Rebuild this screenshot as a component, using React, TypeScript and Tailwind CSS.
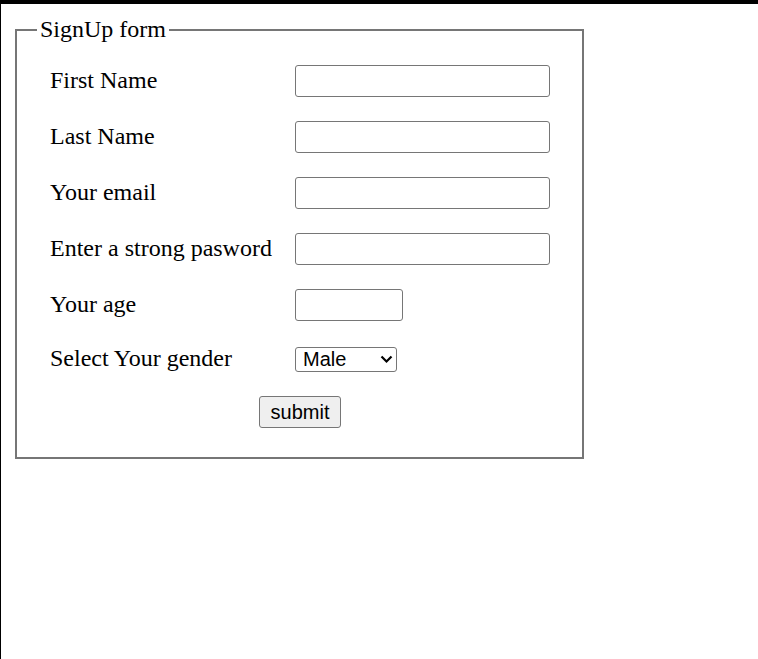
import { useState } from "react";

const serif = { fontFamily: '"Liberation Serif", "Times New Roman", serif' };
const sans = { fontFamily: '"Liberation Sans", Arial, sans-serif' };

interface FieldRowProps {
  label: string;
  type: string;
  short?: boolean;
}

function FieldRow({ label, type, short }: FieldRowProps) {
  return (
    <div className="flex items-center h-14">
      <label className="w-[245px] shrink-0 mb-[2px] text-[24px] leading-[27px] text-black" style={serif}>
        {label}
      </label>
      <input
        type={type}
        className={`${short ? "w-[108px]" : "w-[255px]"} h-8 border border-[#767676] rounded-[3px] bg-white px-[3px] text-[20px] outline-none`}
        style={sans}
      />
    </div>
  );
}

export default function App() {
  const [gender, setGender] = useState("Male");

  return (
    <div className="h-[659px] bg-white border-t-4 border-l border-black overflow-hidden">
      <fieldset className="ml-[14px] mt-[12px] w-[569px] border-2 border-[#767676] pl-[33px] pt-[10px] pb-[29px]">
        <legend className="ml-[-13px] px-[3px] text-[24px] leading-[27px] text-black" style={serif}>
          SignUp form
        </legend>

        <FieldRow label="First Name" type="text" />
        <FieldRow label="Last Name" type="text" />
        <FieldRow label="Your email" type="email" />
        <FieldRow label="Enter a strong pasword" type="password" />
        <FieldRow label="Your age" type="number" short />

        <div className="flex items-center h-[53px]">
          <label className="w-[245px] shrink-0 mb-[2px] text-[24px] leading-[27px] text-black" style={serif}>
            Select Your gender
          </label>
          <div className="relative w-[102px] h-[25px]">
            <select
              value={gender}
              onChange={(e) => setGender(e.target.value)}
              className="appearance-none w-full h-full border border-[#767676] rounded-[3px] bg-white pl-[7px] text-[20px] leading-[23px] text-black outline-none"
              style={sans}
            >
              <option>Male</option>
              <option>Female</option>
              <option>Other</option>
            </select>
            {/* dropdown chevron */}
            <svg
              className="absolute right-[4px] top-[8px] pointer-events-none"
              width="13"
              height="9"
              viewBox="0 0 13 9"
              fill="none"
            >
              <path d="M1.5 1.5 L6.5 6.5 L11.5 1.5" stroke="#000" strokeWidth="2.2" />
            </svg>
          </div>
        </div>

        <div className="flex mt-[10px] pl-[209px]">
          <button
            type="submit"
            className="w-[82px] h-8 border border-[#767676] rounded-[3px] bg-[#efefef] text-[20px] text-black"
            style={sans}
          >
            submit
          </button>
        </div>
      </fieldset>
    </div>
  );
}
